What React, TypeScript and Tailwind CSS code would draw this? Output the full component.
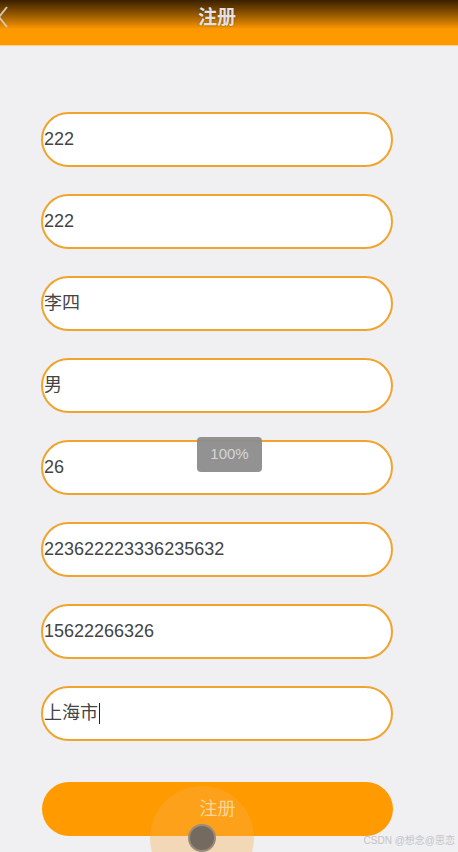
import React from 'react';

const fields = ['222', '222', '李四', '男', '26', '223622223336235632', '15622266326', '上海市'];

export default function App() {
  return (
    <div
      className="relative w-[458px] h-[852px] overflow-hidden bg-[#f0eff2]"
      style={{ fontFamily: '"Liberation Sans", "Noto Sans CJK SC", sans-serif' }}
    >
      {/* Header */}
      <div className="relative h-[46px] bg-gradient-to-b from-[#3a2000] via-[#ff9900] via-[65%] to-[#ff9900] flex items-center justify-center pr-[24px] border-b border-[#ffd08a]">
        <svg className="absolute left-[-4px] top-[6px]" width="14" height="22" viewBox="0 0 14 22">
          <path d="M11 1 L3 11 L11 21" fill="none" stroke="#d2c6b4" strokeWidth="2" />
        </svg>
        <span className="text-[19px] font-bold text-[#e2e2e2] -mt-[8px] [text-shadow:0_0_2px_rgba(0,0,0,0.4)]">注册</span>
      </div>

      {/* Form */}
      <div className="flex flex-col gap-[27px] pt-[66px] pl-[41px]">
        {fields.map((v, i) => (
          <div
            key={i}
            className="w-[352px] h-[55px] rounded-full border-2 border-[#f0a42e] bg-white flex items-center pl-[1px] text-[18px] text-[#444]"
          >
            <span>{v}</span>
            {i === fields.length - 1 && <span className="w-px h-[21px] bg-[#222] ml-[1px]" />}
          </div>
        ))}
        <div className="mt-[14px] w-[351px] ml-[1px] h-[54px] rounded-full bg-[#ff9a00] flex items-center justify-center text-[18px] text-[#fde9c4]">
          注册
        </div>
      </div>

      {/* zoom tooltip */}
      <div className="absolute left-[197px] top-[437px] w-[65px] h-[35px] rounded-[4px] bg-[#8c8c8c]/95 flex items-center justify-center text-[15px] text-[#d6d6d6]">
        100%
      </div>

      {/* touch indicator */}
      <div className="absolute left-[150px] top-[786px] w-[104px] h-[104px] rounded-full bg-[#f5b048]/35" />
      <div className="absolute left-[188px] top-[824px] w-[28px] h-[28px] rounded-full bg-[#756a60] border-2 border-[#9a8c7c]" />

      {/* watermark */}
      <div className="absolute right-[3px] top-[833px] text-[10px] text-[#c4c4c4]">CSDN @想念@思恋</div>
    </div>
  );
}
